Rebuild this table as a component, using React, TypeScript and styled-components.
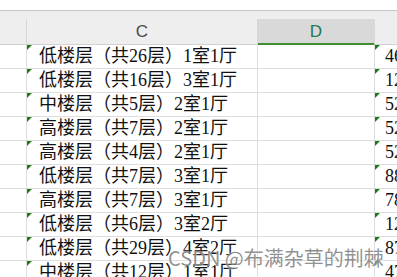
import React from "react";
import styled, { createGlobalStyle, css } from "styled-components";

const Global = createGlobalStyle`
  html, body { margin: 0; padding: 0; background: #fff; overflow: hidden; }
  #root { width: 397px; height: 277px; overflow: hidden; }
`;

const Page = styled.div`
  position: relative;
  width: 397px;
  height: 277px;
  overflow: hidden;
  background: #fff;
  font-family: "Liberation Serif", "Noto Sans CJK SC", serif;
`;

const TopStrip = styled.div`
  height: 10px;
  background: #fff;
`;

const HeaderBand = styled.div`
  border-top: 1px solid #c6c6c6;
  background: #eeeeee;
  padding-top: 8px;
`;

const cols = css`
  display: grid;
  grid-template-columns: 27px 231px 117px 1fr;
`;

const HeaderRow = styled.div`
  ${cols};
  height: 26px;
`;

const HeadCell = styled.div<{ $selected?: boolean; $last?: boolean }>`
  box-sizing: border-box;
  display: flex;
  align-items: center;
  justify-content: center;
  border-bottom: 1px solid #d2d2d2;
  border-right: ${(p) => (p.$last ? "none" : "1px solid #d6d6d6")};
  font-family: "Liberation Sans", "Noto Sans", sans-serif;
  font-size: 17px;
  padding-top: 1px;
  color: ${(p) => (p.$selected ? "#1f7a52" : "#4a4a4a")};
  background: ${(p) => (p.$selected ? "#d9d9d9" : "transparent")};
  ${(p) =>
    p.$selected &&
    css`
      border-bottom: 1px solid #3f8d2f;
      box-shadow: inset 0 -1px 0 #3f8d2f;
      border-right-color: #d9d9d9;
    `}
`;

const Row = styled.div`
  ${cols};
  height: 24px;
`;

const Cell = styled.div<{ $pad?: number; $last?: boolean }>`
  position: relative;
  box-sizing: border-box;
  border-bottom: 1px solid #dedede;
  border-right: ${(p) => (p.$last ? "none" : "1px solid #dedede")};
  padding-left: ${(p) => p.$pad ?? 0}px;
  font-size: 18px;
  line-height: 23px;
  color: #111;
  white-space: nowrap;
  overflow: hidden;
`;

const Mark = styled.span`
  position: absolute;
  left: 0;
  top: 0;
  width: 0;
  height: 0;
  border-top: 5px solid #1d7a1d;
  border-right: 5px solid transparent;
`;

const Watermark = styled.div`
  position: absolute;
  left: 168px;
  top: 247px;
  font-family: "Noto Sans CJK SC", "Noto Sans", sans-serif;
  font-size: 20px;
  line-height: 22px;
  color: rgba(115, 115, 115, 0.78);
  text-shadow: 0 0 2px rgba(255, 255, 255, 0.9);
  white-space: nowrap;
  pointer-events: none;
`;

const rows: [string, string][] = [
  ["低楼层（共26层）1室1厅", "46"],
  ["低楼层（共16层）3室1厅", "12"],
  ["中楼层（共5层）2室1厅", "52"],
  ["高楼层（共7层）2室1厅", "52"],
  ["高楼层（共4层）2室1厅", "52"],
  ["低楼层（共7层）3室1厅", "88"],
  ["高楼层（共7层）3室1厅", "78"],
  ["低楼层（共6层）3室2厅", "12"],
  ["低楼层（共29层）4室2厅", "87"],
  ["中楼层（共12层）1室1厅", "47"],
];

export default function App() {
  return (
    <Page>
      <Global />
      <TopStrip />
      <HeaderBand>
        <HeaderRow>
          <HeadCell />
          <HeadCell>C</HeadCell>
          <HeadCell $selected>D</HeadCell>
          <HeadCell $last />
        </HeaderRow>
      </HeaderBand>
      {rows.map(([c, e], i) => (
        <Row key={i}>
          <Cell />
          <Cell $pad={12}>
            <Mark />
            {c}
          </Cell>
          <Cell />
          <Cell $pad={10} $last>
            <Mark />
            {e}
          </Cell>
        </Row>
      ))}
      <Watermark>CSDN @布满杂草的荆棘</Watermark>
    </Page>
  );
}
